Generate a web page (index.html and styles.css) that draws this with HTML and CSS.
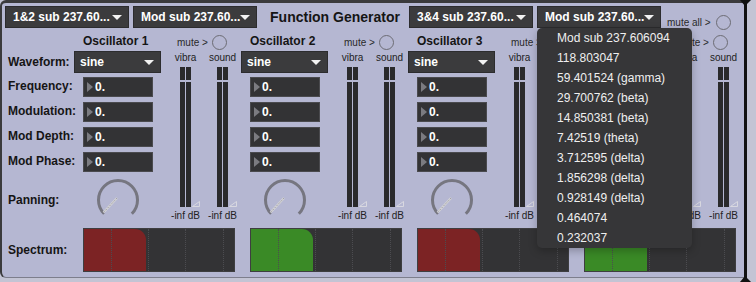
FILE: index.html
```html
<!DOCTYPE html>
<html lang="en">
<head>
  <meta charset="UTF-8">
  <title>Function Generator</title>
  <link rel="stylesheet" href="styles.css">
</head>
<body>

<div class="screen">
  <div class="window">
    <div class="topbar">
      <div class="menu">1&amp;2 sub 237.60...<span class="arrow"></span></div>
      <div class="menu">Mod sub 237.60...<span class="arrow"></span></div>
      <div class="title">Function Generator</div>
      <div class="menu">3&amp;4 sub 237.60...<span class="arrow"></span></div>
      <div class="menu open">Mod sub 237.60...<span class="arrow"></span>
        <ul class="popup">
          <li>Mod sub 237.606094</li>
          <li>118.803047</li>
          <li>59.401524 (gamma)</li>
          <li>29.700762 (beta)</li>
          <li>14.850381 (beta)</li>
          <li>7.42519 (theta)</li>
          <li>3.712595 (delta)</li>
          <li>1.856298 (delta)</li>
          <li>0.928149 (delta)</li>
          <li>0.464074</li>
          <li>0.232037</li>
        </ul>
      </div>
      <div class="mute-all">mute all &gt;<span class="toggle"></span></div>
    </div>

    <div class="board">
      <div class="labels">
        <div class="lbl row2">Waveform:</div>
        <div class="lbl row3">Frequency:</div>
        <div class="lbl row4">Modulation:</div>
        <div class="lbl row5">Mod Depth:</div>
        <div class="lbl row6">Mod Phase:</div>
        <div class="lbl row7">Panning:</div>
        <div class="lbl row8">Spectrum:</div>
      </div>

      <div class="osc" data-n="1"></div>
      <div class="osc" data-n="2"></div>
      <div class="osc" data-n="3"></div>
      <div class="osc under-menu" data-n="4"></div>
    </div>
  </div>
  <div class="edge"></div>
</div>

<script>
  // every oscillator column is the same, only the number and the spectrum colour change
  const fills = { 1: "red", 2: "green", 3: "red", 4: "green" };

  function meter(name) {
    return `
      <div class="meter">
        <div class="meter-name">${name}</div>
        <div class="meter-body">
          <div class="bar"></div>
          <div class="bar"></div>
          <svg class="grip" width="8" height="6" viewBox="0 0 8 6">
            <path d="M0.5 5.5 L7.5 5.5 L7.5 0.5 Z" fill="none" stroke="#d8d8e0" stroke-width="1"/>
          </svg>
        </div>
        <div class="meter-db">-inf dB</div>
      </div>`;
  }

  document.querySelectorAll(".osc").forEach((osc) => {
    const n = osc.dataset.n;
    osc.innerHTML = `
      <div class="osc-title">Oscillator ${n}</div>
      <div class="mute">mute &gt;<span class="toggle"></span></div>
      <div class="wave">sine<span class="arrow"></span></div>
      <div class="num row3"><span class="tri"></span>0.</div>
      <div class="num row4"><span class="tri"></span>0.</div>
      <div class="num row5"><span class="tri"></span>0.</div>
      <div class="num row6"><span class="tri"></span>0.</div>
      <svg class="dial" width="44" height="44" viewBox="0 0 44 44">
        <path d="M8.2 35.8 A19.5 19.5 0 1 1 35.8 35.8" fill="none" stroke="#767680" stroke-width="3"/>
        <line x1="21" y1="20" x2="7.5" y2="34.5" stroke="#d2d2d6" stroke-width="2.2"/>
        <line x1="21" y1="20" x2="7.5" y2="34.5" stroke="#8e8e94" stroke-width="1" stroke-dasharray="1 1.5"/>
      </svg>
      <div class="meters">${meter("vibra")}${meter("sound")}</div>
      <div class="spectrum ${fills[n]}">
        <div class="cell" style="width:27px"></div>
        <div class="cell" style="width:36px"></div>
        <div class="cell" style="width:36px"></div>
        <div class="cell" style="width:37px"></div>
        <div class="cell last"></div>
      </div>`;
  });
</script>

</body>
</html>
```

FILE: styles.css
```css
body {
  margin: 0;
  background-color: #c3c4d4;
  font-family: "Liberation Sans", Arial, sans-serif;
  color: #151515;
}

.screen {
  display: flex;
  width: 756px;
  height: 282px;
  overflow: hidden;
}

.window {
  box-sizing: border-box;
  width: 744px;
  height: 278px;
  background-color: #b5b7d2;
  border-top: 3px solid #3a3a3c;
  border-left: 2px solid #3a3a3c;
  border-bottom: 1px solid #7d7e8c;
  border-top-left-radius: 6px;
  border-bottom-left-radius: 6px;
  position: relative;
}

.edge {
  width: 3px;
  height: 282px;
  background-color: #111;
  position: relative;
}

.edge::before,
.edge::after {
  content: "";
  position: absolute;
  left: -4px;
  border-left: 5px solid transparent;
  border-right: 6px solid transparent;
}

.edge::before {
  top: 0;
  border-top: 6px solid #111;
}

.edge::after {
  bottom: 0;
  border-bottom: 6px solid #111;
}

/* top bar */

.topbar {
  display: flex;
  height: 25px;
  padding: 3px 0 0 3px;
  box-sizing: border-box;
}

.menu {
  box-sizing: border-box;
  position: relative;
  width: 124px;
  height: 22px;
  margin-right: 4px;
  padding-left: 7px;
  background-color: #3b3b3d;
  border: 1px solid #2c2c2e;
  color: #fff;
  font-size: 12px;
  font-weight: bold;
  line-height: 20px;
}

.menu .arrow,
.wave .arrow {
  position: absolute;
  right: 6px;
  top: 8px;
  border-left: 5px solid transparent;
  border-right: 5px solid transparent;
  border-top: 5px solid #f2f2f2;
}

.title {
  width: 148px;
  text-align: center;
  font-size: 14px;
  font-weight: bold;
  line-height: 22px;
}

.menu.open {
  margin-right: 6px;
}

.popup {
  position: absolute;
  z-index: 5;
  left: -1px;
  top: 21px;
  width: 155px;
  margin: 0;
  padding: 0;
  list-style: none;
  background-color: #363638;
  border-radius: 5px;
  box-shadow: 0 3px 8px rgba(0, 0, 0, 0.25);
}

.popup li {
  height: 20px;
  line-height: 20px;
  padding-left: 20px;
  font-size: 12px;
  font-weight: normal;
  color: #efefef;
}

.mute-all {
  display: flex;
  align-items: center;
  margin-top: 5px;
  font-size: 10px;
  color: #2a2a2a;
  height: 22px;
}

.toggle {
  display: inline-block;
  box-sizing: border-box;
  width: 15px;
  height: 15px;
  margin-left: 5px;
  border: 1.5px solid #6c6c74;
  border-radius: 50%;
}

/* board */

.board {
  display: flex;
  margin-top: 5px;
}

.labels,
.osc {
  display: grid;
  grid-template-rows: 18px 26px 25px 25px 25px 26px 50px 44px;
}

.labels {
  width: 72px;
  flex-shrink: 0;
}

.lbl {
  padding-left: 6px;
  font-size: 12px;
  font-weight: bold;
  line-height: 19px;
}

.row2 { grid-row: 2; line-height: 22px; }
.row3 { grid-row: 3; }
.row4 { grid-row: 4; }
.row5 { grid-row: 5; }
.row6 { grid-row: 6; }
.row7 { grid-row: 7; line-height: 44px; }
.row8 { grid-row: 8; line-height: 44px; }

.osc {
  width: 167px;
  flex-shrink: 0;
  grid-template-columns: 100px 67px;
}

/* the open menu covers these in oscillator 4 */
.under-menu .osc-title,
.under-menu .wave,
.under-menu .num {
  visibility: hidden;
}

.osc-title {
  grid-row: 1;
  grid-column: 1;
  padding-left: 9px;
  font-size: 12px;
  font-weight: bold;
  line-height: 17px;
}

.mute {
  grid-row: 1;
  grid-column: 2;
  display: flex;
  align-items: center;
  padding-left: 3px;
  font-size: 10px;
  color: #2a2a2a;
  height: 18px;
}

.mute .toggle {
  margin-left: 4px;
}

.wave {
  grid-row: 2;
  grid-column: 1;
  position: relative;
  box-sizing: border-box;
  width: 87px;
  height: 22px;
  padding-left: 5px;
  background-color: #3b3b3d;
  border: 1px solid #2c2c2e;
  color: #fff;
  font-size: 12px;
  font-weight: bold;
  line-height: 20px;
}

.num {
  grid-column: 1;
  display: flex;
  align-items: center;
  box-sizing: border-box;
  width: 70px;
  height: 20px;
  margin-left: 9px;
  background-color: #333335;
  border: 1px solid #4a4a4e;
  color: #fff;
  font-size: 12px;
  font-weight: bold;
}

.tri {
  margin: 0 2px 0 3px;
  border-top: 5px solid transparent;
  border-bottom: 5px solid transparent;
  border-left: 6px solid #7b7b80;
}

.dial {
  grid-row: 7;
  grid-column: 1;
  margin-left: 22px;
}

.meters {
  grid-row: 2 / 8;
  grid-column: 2;
  display: flex;
  gap: 8px;
  margin-left: -3px;
}

.meter {
  width: 29px;
  display: flex;
  flex-direction: column;
  align-items: center;
}

.meter-name,
.meter-db {
  font-size: 10px;
  line-height: 14px;
  color: #222;
}

.meter-body {
  display: flex;
  align-items: flex-end;
  gap: 1px;
  height: 140px;
  margin: 2px 0 2px 8px;
}

.bar {
  width: 5px;
  height: 140px;
  background: linear-gradient(#2a2a2c 0 13px, #b5b7d2 13px 15px, #2a2a2c 15px);
}

.spectrum {
  grid-row: 8;
  grid-column: 1 / 3;
  position: relative;
  display: flex;
  box-sizing: border-box;
  width: 152px;
  height: 44px;
  margin-left: 9px;
  background-color: #333335;
  border: 1px solid #3e3e40;
}

.spectrum::before {
  content: "";
  position: absolute;
  left: 0;
  top: 0;
  bottom: 0;
  width: 62px;
  border-top-right-radius: 11px;
}

.spectrum.red::before {
  background-color: #7c2324;
}

.spectrum.green::before {
  background-color: #3a8a26;
}

.cell {
  position: relative;
  border-right: 1px dotted #4c4c50;
}

.cell.last {
  flex: 1;
  border-right: none;
}
```
